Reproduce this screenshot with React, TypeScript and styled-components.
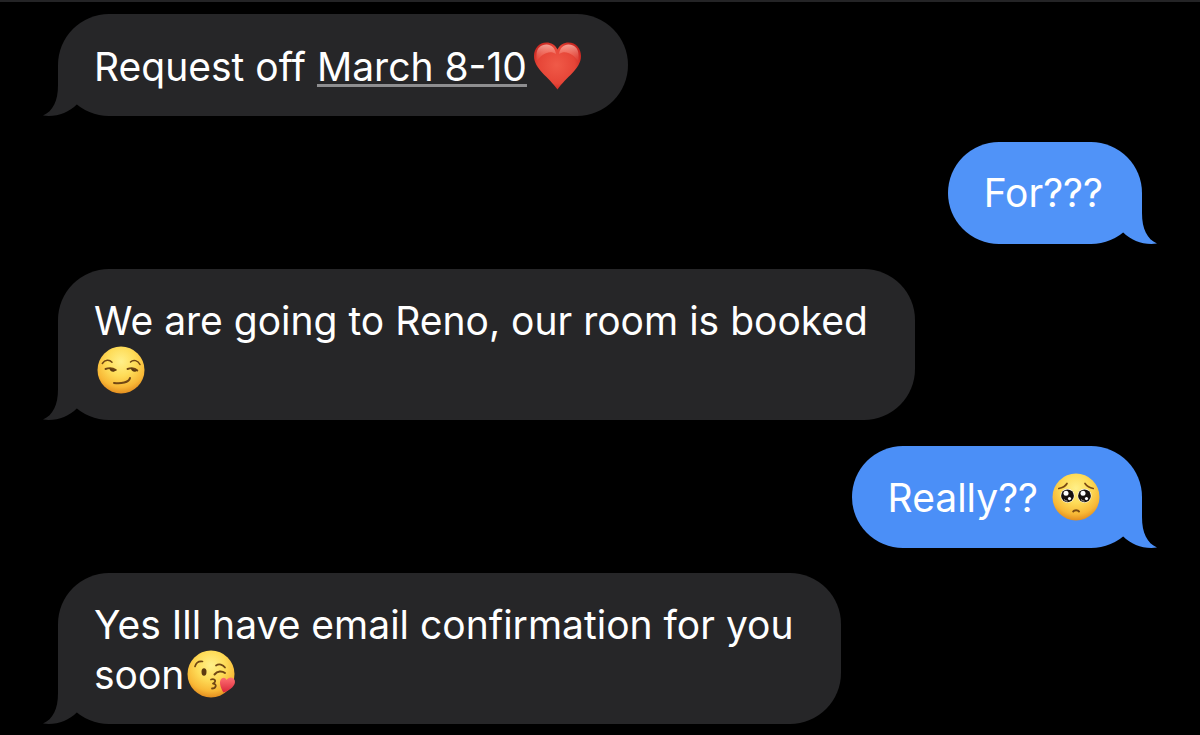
import React from "react";
import styled, { createGlobalStyle } from "styled-components";

const GlobalStyle = createGlobalStyle`
  *, *::before, *::after { box-sizing: border-box; }
  body {
    margin: 0;
    background: #000;
    color: #fff;
    font-family: Inter, "Liberation Sans", sans-serif;
  }
`;

type Side = "received" | "sent";

const Thread = styled.main`
  border-top: 2px solid #242426;
  padding: 12px 58px 11px;
`;

const MessageList = styled.ol`
  list-style: none;
  margin: 0;
  padding: 0;
  display: flex;
  flex-direction: column;
`;

const MessageRow = styled.li<{ $side: Side }>`
  display: flex;
  justify-content: ${(p) => (p.$side === "sent" ? "flex-end" : "flex-start")};

  &:not(:first-child) {
    margin-top: ${(p) => (p.$side === "sent" ? "26px" : "25px")};
  }
`;

const BubbleBox = styled.div<{ $side: Side; $tone: string }>`
  position: relative;
  padding: ${(p) => (p.$side === "sent" ? "26px 39px 27px 36px" : "27px 47px 26px 36px")};
  border-radius: 51px;
  background: ${(p) => p.$tone};
  color: ${(p) => p.$tone};
`;

const BubbleText = styled.p`
  margin: 0;
  color: #fff;
  font-size: 39px;
  line-height: 49px;
`;

const Line = styled.span`
  display: block;
  white-space: nowrap;
  height: 49px;
`;

const TailShape = styled.svg<{ $side: Side }>`
  position: absolute;
  bottom: 0;
  ${(p) => (p.$side === "sent" ? "right: -16px; transform: scaleX(-1);" : "left: -16px;")}
  width: 36px;
  height: 51px;
`;

const DateLink = styled.a`
  color: inherit;
  text-decoration: underline;
  text-decoration-color: #8e8e90;
  text-decoration-thickness: 3px;
  text-underline-offset: 3px;
  text-decoration-skip-ink: none;
`;

const EmojiArt = styled.svg`
  width: 54px;
  height: 50px;
  vertical-align: -10px;
`;

function Bubble({ side, tone = "#262628", children }: { side: Side; tone?: string; children: React.ReactNode }) {
  return (
    <MessageRow $side={side}>
      <BubbleBox $side={side} $tone={tone}>
        <TailShape $side={side} viewBox="0 0 36 51" aria-hidden="true">
          <path fill="currentColor" d="M16 0V20C16 36 11 46 1 50.6C14 52.400 26 48 35 39.300V0Z" />
        </TailShape>
        <BubbleText>{children}</BubbleText>
      </BubbleBox>
    </MessageRow>
  );
}

function Face({ label, id, children }: { label: string; id: string; children: React.ReactNode }) {
  return (
    <EmojiArt viewBox="0 0 54 50" role="img" aria-label={label}>
      <defs>
        <radialGradient id={id} cx="0.5" cy="0.32" r="0.68">
          <stop offset="0" stopColor="#fff08a" />
          <stop offset="0.45" stopColor="#fedc58" />
          <stop offset="0.8" stopColor="#f8b836" />
          <stop offset="1" stopColor="#e38e20" />
        </radialGradient>
      </defs>
      <circle cx="27" cy="25" r="23.500" fill={`url(#${id})`} />
      {children}
    </EmojiArt>
  );
}

function Heart() {
  return (
    <EmojiArt viewBox="0 0 54 50" role="img" aria-label="red heart">
      <defs>
        <radialGradient id="heartFill" cx="0.48" cy="0.48" r="0.6">
          <stop offset="0" stopColor="#f05a48" />
          <stop offset="0.65" stopColor="#e64537" />
          <stop offset="1" stopColor="#c4211d" />
        </radialGradient>
        <linearGradient id="heartShine" x1="0" y1="0" x2="0" y2="1">
          <stop offset="0" stopColor="#ffc4b8" stopOpacity="0.75" />
          <stop offset="1" stopColor="#ff8a78" stopOpacity="0" />
        </linearGradient>
      </defs>
      <path
        fill="url(#heartFill)"
        d="M30.500 8.500C32.500 4 37 1.500 41.500 1.500C49 1.500 54 7.500 54 15C54 28 39 36 30.500 48.500C22 36 7 28 7 15C7 7.500 12 1.500 19.500 1.500C24 1.500 28.500 4 30.500 8.500Z"
      />
      <path fill="url(#heartShine)" d="M9.500 14C9.500 7 14 3.500 19.500 3.500C24.500 3.500 28 7 29 13C23 9 15 12 9.500 21Z" />
      <path fill="url(#heartShine)" d="M51.500 14C51.500 7 47 3.500 41.500 3.500C36.500 3.500 33 7 32 13C38 9 46 12 51.500 21Z" />
    </EmojiArt>
  );
}

function Smirk() {
  return (
    <Face label="smirking face" id="smirkFill">
      <g fill="none" stroke="#714714" strokeLinecap="round" strokeLinejoin="round">
        <path strokeWidth="1.500" d="M8.300 18.500C11 14.500 15.500 14.500 18 17.300M36.500 17C39.500 14 44 15.500 46 19.500" />
        <path strokeWidth="1.900" d="M11.500 24C15 22.700 19 23 21.800 25M33.500 24C37 22.700 41 23 43.300 25.500" />
        <path strokeWidth="2" d="M20 38C27 39 35 37.500 36 33" />
      </g>
      <path fill="#5d3a10" d="M15.500 23.200C15.300 26.800 20.500 28.200 21.800 25ZM37 23.200C36.800 26.800 42 28.200 43.300 25Z" />
    </Face>
  );
}

function Pleading() {
  return (
    <Face label="pleading face" id="pleadingFill">
      <g fill="none" stroke="#7a4a12" strokeLinecap="round">
        <path strokeWidth="1.700" d="M9.800 16.500C13.500 15.800 16.500 14 18 11.500M36 11.500C37.800 14 40.500 15.800 44.200 16.500" />
        <path strokeWidth="2" d="M24.200 39.500C25.200 37.700 29 37.700 30 39.500" />
      </g>
      {[18.5, 35.5].map((x) => (
        <g key={x}>
          <circle cx={x} cy="23.800" r="7" fill="#fffaf0" />
          <circle cx={x} cy="23.800" r="6.400" fill="#17110e" />
          <circle cx={x - 1.5} cy="21.300" r="2.500" fill="#fff" />
          <circle cx={x + 2} cy="26.600" r="1.600" fill="#fff" />
          <path d={`M${x - 3.5} 27.500q1.500 1.700 3.500 1.700`} fill="none" stroke="#b8b0aa" strokeWidth="1" />
        </g>
      ))}
    </Face>
  );
}

function Kiss() {
  return (
    <Face label="face blowing a kiss" id="kissFill">
      <defs>
        <linearGradient id="kissHeart" x1="0" y1="0" x2="0" y2="1">
          <stop offset="0" stopColor="#ff7172" />
          <stop offset="1" stopColor="#d9263a" />
        </linearGradient>
      </defs>
      <g fill="none" stroke="#714714" strokeLinecap="round" strokeLinejoin="round">
        <path strokeWidth="1.700" d="M11 17.500C12 14 15 12 18.500 12.500M32 16.500C35 14.500 39 15.500 41 18.500" />
        <path strokeWidth="2" d="M30.500 25.500C33.500 21.800 38 21.800 41 24" />
        <path strokeWidth="1.800" d="M27 30.500C31 29.300 33 32.500 29 34.500C33.500 35 32 39.500 28 39.500" />
      </g>
      <ellipse cx="20" cy="23" rx="2.500" ry="3.700" fill="#5d3a10" />
      <path
        fill="url(#kissHeart)"
        d="M42.500 31C44.500 27.500 49.500 27.500 50.800 31.500C52 36 47 41 39.500 43.500C36 38 34.500 31.500 38 29.200C40 28 42 29 42.500 31Z"
      />
    </Face>
  );
}

export default function App() {
  return (
    <>
      <GlobalStyle />
      <Thread>
        <MessageList>
          <Bubble side="received">
            <Line>
              Request off <DateLink href="#march-8-10">March 8-10</DateLink>
              <Heart />
            </Line>
          </Bubble>
          <Bubble side="sent" tone="#5093f8">
            <Line>For???</Line>
          </Bubble>
          <Bubble side="received">
            <Line>We are going to Reno, our room is booked</Line>
            <Line>
              <Smirk />
            </Line>
          </Bubble>
          <Bubble side="sent" tone="#4b8ff7">
            <Line>
              Really?? <Pleading />
            </Line>
          </Bubble>
          <Bubble side="received">
            <Line>Yes Ill have email confirmation for you</Line>
            <Line>
              soon
              <Kiss />
            </Line>
          </Bubble>
        </MessageList>
      </Thread>
    </>
  );
}
